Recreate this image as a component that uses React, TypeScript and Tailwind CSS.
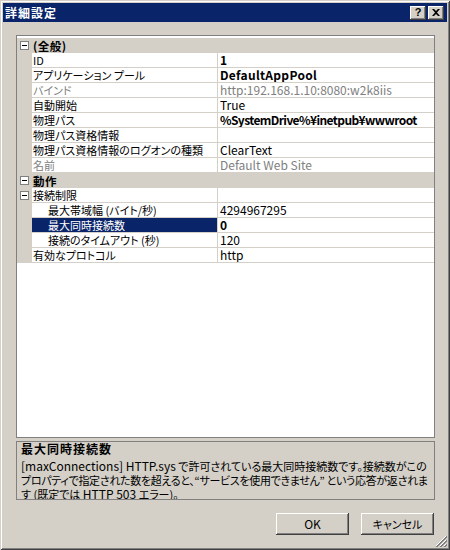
import React from "react";

type Row =
  | { kind: "cat"; label: string }
  | {
      kind: "prop";
      label: string;
      value?: string;
      bold?: boolean;
      tight?: boolean;
      disabled?: boolean;
      indent?: boolean;
      expander?: boolean;
      selected?: boolean;
    };

const rows: Row[] = [
  { kind: "cat", label: "(全般)" },
  { kind: "prop", label: "ID", value: "1", bold: true },
  { kind: "prop", label: "アプリケーション プール", value: "DefaultAppPool", bold: true },
  { kind: "prop", label: "バインド", value: "http:192.168.1.10:8080:w2k8iis", disabled: true },
  { kind: "prop", label: "自動開始", value: "True" },
  { kind: "prop", label: "物理パス", value: "%SystemDrive%¥inetpub¥wwwroot", bold: true, tight: true },
  { kind: "prop", label: "物理パス資格情報", value: "" },
  { kind: "prop", label: "物理パス資格情報のログオンの種類", value: "ClearText" },
  { kind: "prop", label: "名前", value: "Default Web Site", disabled: true },
  { kind: "cat", label: "動作" },
  { kind: "prop", label: "接続制限", value: "", expander: true },
  { kind: "prop", label: "最大帯域幅 (バイト/秒)", value: "4294967295", indent: true },
  { kind: "prop", label: "最大同時接続数", value: "0", bold: true, indent: true, selected: true },
  { kind: "prop", label: "接続のタイムアウト (秒)", value: "120", indent: true },
  { kind: "prop", label: "有効なプロトコル", value: "http" },
];

function Minus() {
  return (
    <div className="w-[9px] h-[9px] border border-[#808080] bg-white flex items-center justify-center">
      <div className="w-[5px] h-[1px] bg-black" />
    </div>
  );
}

function GridRow({ row }: { row: Row }) {
  if (row.kind === "cat") {
    return (
      <div className="flex h-[15px] bg-[#d4d0c8]">
        <div className="w-[15px] shrink-0 flex items-center justify-center">
          <Minus />
        </div>
        <div className="pl-[1px] flex items-center font-bold text-[11.5px] tracking-[0.5px] whitespace-nowrap">{row.label}</div>
      </div>
    );
  }
  const nameColor = row.selected
    ? "bg-[#0a246a] text-white"
    : row.disabled
    ? "text-[#808080]"
    : "text-black";
  return (
    <div className="flex h-[15px]">
      <div className="w-[15px] shrink-0 bg-[#d4d0c8] flex items-center justify-center">
        {row.expander && <Minus />}
      </div>
      <div
        className={`w-[186px] shrink-0 border-b border-r border-[#d4d0c8] flex items-center whitespace-nowrap overflow-hidden text-[11px] ${
          row.indent ? "pl-[16px]" : "pl-[1px]"
        } ${nameColor}`}
      >
        {row.label}
      </div>
      <div
        className={`flex-1 border-b border-[#d4d0c8] pl-[2px] flex items-center whitespace-nowrap overflow-hidden ${
          row.disabled ? "text-[#808080]" : "text-black"
        } ${row.bold ? "font-bold" : ""} ${row.tight ? "tracking-[-0.6px]" : row.bold ? "tracking-[0.3px]" : ""}`}
      >
        {row.value}
      </div>
    </div>
  );
}

const raised =
  "shadow-[inset_-1px_-1px_0_#404040,inset_1px_1px_0_#ffffff,inset_-2px_-2px_0_#808080,inset_2px_2px_0_#d4d0c8]";

export default function App() {
  return (
    <div className="w-[450px] h-[550px] relative bg-[#d4d0c8] p-[3px] flex flex-col text-[12px] leading-[14px] font-['Noto_Sans_CJK_JP',sans-serif] [font-feature-settings:'palt'] shadow-[inset_1px_1px_0_#d4d0c8,inset_-1px_-1px_0_#404040,inset_2px_2px_0_#ffffff,inset_-2px_-2px_0_#808080] overflow-hidden select-none">
      {/* Title bar */}
      <div className="h-[19px] bg-[#0a246a] flex items-center pl-[2px] pr-[3px]">
        <div className="text-white font-bold tracking-[1px] text-[12px] leading-[14px] flex-1 [font-feature-settings:normal]">詳細設定</div>
        <div className="flex gap-[2px]">
          <div className={`w-[16px] h-[14px] bg-[#d4d0c8] ${raised} flex items-center justify-center`}>
            <span className="font-bold text-[11px] leading-[11px] text-black font-['Liberation_Sans',sans-serif]">?</span>
          </div>
          <div className={`w-[16px] h-[14px] bg-[#d4d0c8] ${raised} flex items-center justify-center`}>
            <svg width="8" height="7" viewBox="0 0 8 7">
              <path d="M0 0h2l2 2 2-2h2L5 3.5 8 7H6L4 5 2 7H0l3-3.5z" fill="#000" />
            </svg>
          </div>
        </div>
      </div>

      {/* Body */}
      <div className="flex-1 flex flex-col pl-[13px] pt-[13px]">
        <div className="w-[419px] h-[403px] border border-[#808080] bg-white pt-[2px] flex flex-col">
          {rows.map((r, i) => (
            <GridRow key={i} row={r} />
          ))}
        </div>

        <div className="w-[419px] h-[59px] mt-[3px] border border-[#808080] pl-[4px] overflow-hidden text-black">
          <div className="font-bold tracking-[1px] whitespace-nowrap [font-feature-settings:normal]">最大同時接続数</div>
          <div className="mt-[3px] whitespace-nowrap text-[11px]">
            <span className="text-[12px]">[maxConnections] HTTP.sys</span> で許可されている最大同時接続数です。接続数がこの
          </div>
          <div className="whitespace-nowrap text-[11px] tracking-[-0.3px]">プロパティで指定された数を超えると、“サービスを使用できません” という応答が返されま</div>
          <div className="whitespace-nowrap text-[11px]">
            す (既定では <span className="text-[12px]">HTTP 503</span> エラー)。
          </div>
        </div>

        <div className="w-[419px] flex justify-end gap-[12px] pr-[1px] mt-[13px]">
          <div className={`w-[73px] h-[22px] bg-[#d4d0c8] ${raised} flex items-center justify-center text-black`}>OK</div>
          <div className={`w-[73px] h-[22px] bg-[#d4d0c8] ${raised} flex items-center justify-center text-black text-[11px]`}>キャンセル</div>
        </div>
      </div>

      {/* Resize grip */}
      <svg className="absolute right-[3px] bottom-[3px]" width="12" height="12" viewBox="0 0 12 12">
        <path d="M11 1L1 11M11 5L5 11M11 9L9 11" stroke="#ffffff" strokeWidth="1" />
        <path d="M12 1L1 12M12 2L2 12M12 5L5 12M12 6L6 12M12 9L9 12M12 10L10 12" stroke="#808080" strokeWidth="1" />
      </svg>
    </div>
  );
}
